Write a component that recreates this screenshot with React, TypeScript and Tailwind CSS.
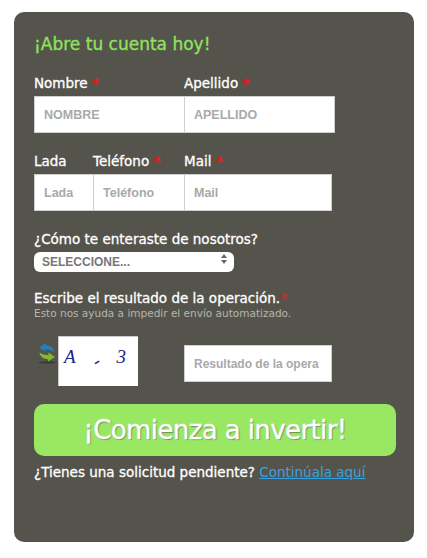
const inputClass = "h-[37px] bg-white border border-[#cfcfcf] pl-[9px] pr-[10px] font-bold font-['Liberation_Sans',sans-serif] text-[#555] placeholder:text-[#a9a9a9] outline-none"
const labelClass = "block text-[13.5px] leading-5 text-white tracking-[0px] [-webkit-text-stroke:0.3px_white]"

const Req = () => <span className="text-[#f01414] font-bold [-webkit-text-stroke:0px]"> *</span>

const RefreshIcon = () => (
  <svg width="18" height="22" viewBox="0 0 18 22">
    <ellipse cx="9" cy="20.5" rx="8.5" ry="1.2" fill="#3a3a32" />
    <path d="M8 1 L1 5.5 L7 9.5 L7 7.2 C10.5 7 14 8 16.5 10 C16 5.5 12 3.4 8 3.4 Z" fill="#1f7fc4" />
    <path d="M10 19.5 L17 15 L10.5 10.5 L10.5 13 C7 13.2 4 12.4 1.5 10.5 C2 15 6 17.2 10 17.2 Z" fill="#7dbb2e" />
  </svg>
)

export default function App() {
  return (
    <div className="min-h-[558px] bg-white pt-3 px-[14px] font-['DejaVu_Sans',sans-serif]">
      <div className="w-[400px] h-[530px] rounded-[10px] bg-[#55544c] pl-5 pt-[20px]">
        <h2 className="text-[17px] leading-6 text-[#8ee35c] [-webkit-text-stroke:0.3px_#8ee35c]">¡Abre tu cuenta hoy!</h2>

        <div className="flex mt-[17px]">
          <div className="w-[150px]">
            <label className={`${labelClass} mb-[3px]`}>Nombre <Req /></label>
            <input className={`${inputClass} w-[151px] text-[12.5px]`} placeholder="NOMBRE" />
          </div>
          <div className="w-[151px]">
            <label className={`${labelClass} mb-[3px]`}>Apellido <Req /></label>
            <input className={`${inputClass} w-[151px] text-[12.5px]`} placeholder="APELLIDO" />
          </div>
        </div>

        <div className="flex mt-[18px]">
          <div className="w-[59px]">
            <label className={`${labelClass} mb-[3px]`}>Lada</label>
            <input className={`${inputClass} w-[60px] text-[12.5px]`} placeholder="Lada" />
          </div>
          <div className="w-[91px]">
            <label className={`${labelClass} mb-[3px]`}>Teléfono <Req /></label>
            <input className={`${inputClass} w-[92px] text-[12.5px]`} placeholder="Teléfono" />
          </div>
          <div className="w-[148px]">
            <label className={`${labelClass} mb-[3px]`}>Mail <Req /></label>
            <input className={`${inputClass} w-[148px] text-[12.5px]`} placeholder="Mail" />
          </div>
        </div>

        <label className={`${labelClass} mt-[18px]`}>¿Cómo te enteraste de nosotros?</label>
        <div className="relative w-[200px] h-5">
          <select className="appearance-none w-full h-full rounded-[6px] bg-white pl-2 text-[12px] font-bold font-['Liberation_Sans',sans-serif] text-[#777] outline-none">
            <option>SELECCIONE...</option>
          </select>
          <svg className="absolute right-[7px] top-[5px]" width="6" height="10" viewBox="0 0 6 10">
            <path d="M3 0 L6 4 L0 4 Z M3 10 L0 6 L6 6 Z" fill="#666" />
          </svg>
        </div>

        <label className={`${labelClass} mt-[19px]`}>Escribe el resultado de la operación.<span className="text-[#f01414] font-bold [-webkit-text-stroke:0px]">*</span></label>
        <p className="text-[10.5px] leading-[11px] text-[#b5b5ae]">Esto nos ayuda a impedir el envío automatizado.</p>

        <div className="flex items-start mt-[17px]">
          <div className="w-6 pl-[4px] pt-[6px]"><RefreshIcon /></div>
          <div className="w-[80px] h-[50px] bg-white border-t border-l border-[#c9c9c9] flex items-start justify-between pl-[5px] pr-[12px] pt-[6px] font-['Liberation_Serif',serif] italic text-[19px] leading-7 text-[#1c2489]">
            <span>A</span>
            <span className="mt-[4px] -rotate-[30deg]">-</span>
            <span>3</span>
          </div>
          <input className={`${inputClass} w-[148px] ml-[46px] mt-[9px] text-[12px]`} placeholder="Resultado de la opera" />
        </div>

        <button className="block w-[362px] h-[52px] mt-[18px] rounded-[10px] bg-[#9ae764] text-[26px] tracking-[-0.6px] text-white text-center [-webkit-text-stroke:0.3px_white] [text-shadow:1px_1px_1px_rgba(90,80,90,0.6)]">¡Comienza a invertir!</button>

        <p className={`${labelClass} mt-[6px]`}>¿Tienes una solicitud pendiente? <a href="#" className="text-[#36a3e0] underline [-webkit-text-stroke:0px]">Continúala aquí</a></p>
      </div>
    </div>
  )
}
